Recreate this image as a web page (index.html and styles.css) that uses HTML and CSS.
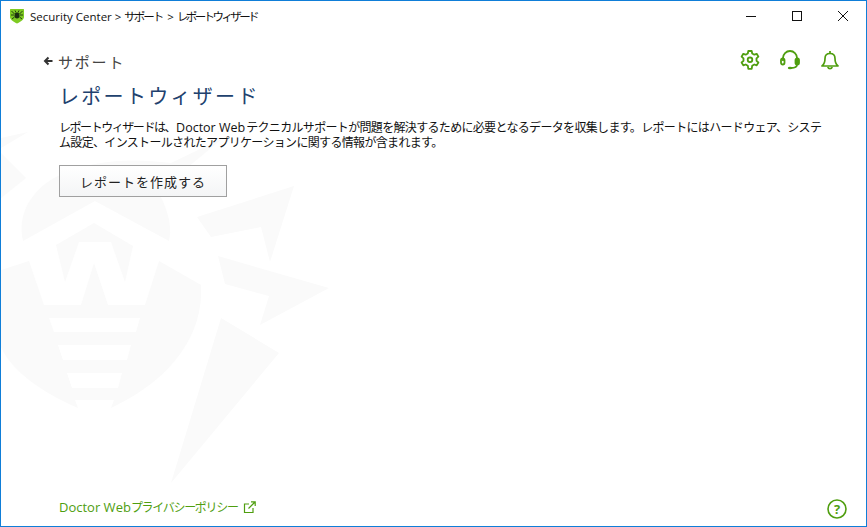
FILE: index.html
```html
<!DOCTYPE html>
<html lang="ja">
<head>
    <meta charset="UTF-8">
    <meta name="viewport" content="width=device-width, initial-scale=1.0">
    <title>Security Center</title>
    <link rel="stylesheet" href="styles.css">
</head>
<body>
    <div class="window">
        <svg class="watermark" viewBox="0 0 330 400" width="330" height="400">
            <path d="M170 353 L220 188 L278 223 Z"/>
            <path d="M217 126 L328 158 L259 195 L268 166 L224 154 Z"/>
            <path d="M196 87 L293 56 L269 132 L260 97 L210 107 Z"/>
            <path d="M0 140 L28 131 L43 175 L80 175 L93 133 L107 175 L144 175 L158 131 L200 155 C203 205 170 250 110 278 L113 270 L74 270 L77 278 C40 262 10 240 0 217 Z"/>
            <path d="M55 115 L93 93 L132 116 L124 152 L110 112 L78 112 L64 152 Z"/>
            <path d="M22 111 L94 71 L168 111 C172 95 165 75 157 62 L222 8 L170 33 C130 28 95 30 63 43 C35 55 15 80 22 111 Z"/>
            <path d="M0 23 L25 48 L0 68 Z"/>
            <path d="M0 8 L27 2 L0 18 Z"/>
            <path class="cut" d="M48 188 L139 188 L135 202 L53 202 Z"/>
            <path class="cut" d="M57 215 L130 215 L126 230 L62 230 Z"/>
            <path class="cut" d="M66 243 L121 243 L117 258 L71 258 Z"/>
        </svg>

        <header class="titlebar">
            <div class="app-title">
                <svg class="logo" viewBox="0 0 16 16" width="16" height="16">
                    <path d="M1 1.500 Q1 1 1.500 1 H14.500 Q15 1 15 1.500 V9 C15 12 11 14 8 15.500 C5 14 1 12 1 9 Z" fill="#7ecb22"/>
                    <path d="M2.500 3 L5.500 6 M13.500 3 L10.500 6 M2 7 H5 M14 7 H11 M3 11 L5.500 9 M13 11 L10.500 9 M6 2.500 L7 4.500 M10 2.500 L9 4.500" stroke="#1c3010" stroke-width=".900" fill="none"/>
                    <ellipse cx="8" cy="7.500" rx="2.500" ry="3" fill="#1c3010"/>
                </svg>
                <span>Security Center &gt; <span class="crumb">サポート</span> &gt; <span class="crumb narrow">レポートウィザード</span></span>
            </div>
            <div class="window-controls">
                <svg viewBox="0 0 46 30" width="46" height="30"><path d="M18 15.500 H28" stroke="#111"/></svg>
                <svg viewBox="0 0 46 30" width="46" height="30"><rect x="18.500" y="10.500" width="9" height="9" fill="none" stroke="#111"/></svg>
                <svg viewBox="0 0 46 30" width="46" height="30"><path d="M18 10 L28 20 M28 10 L18 20" stroke="#111"/></svg>
            </div>
        </header>

        <div class="toolbar">
            <a class="back">
                <svg viewBox="0 0 10 10" width="10" height="10"><path d="M9.500 5 H2.500 M5.500 1.500 L2 5 L5.500 8.500" fill="none" stroke="#333" stroke-width="2"/></svg>
                <span>サポート</span>
            </a>
            <div class="tools">
                <svg viewBox="0 0 20 20" width="20" height="20" fill="none" stroke="#4f9e0f" stroke-width="1.800">
                    <path d="M8.300 1 H11.700 L12.200 3.500 L14.300 4.700 L16.700 3.800 L18.400 6.700 L16.500 8.400 V10.800 L18.400 12.500 L16.700 15.400 L14.300 14.500 L12.200 15.700 L11.700 18.800 H8.300 L7.800 15.700 L5.700 14.500 L3.300 15.400 L1.600 12.500 L3.500 10.800 V8.400 L1.600 6.700 L3.300 3.800 L5.700 4.700 L7.800 3.500 Z" stroke-linejoin="round"/>
                    <circle cx="10" cy="9.800" r="2.300"/>
                </svg>
                <svg viewBox="0 0 20 20" width="20" height="20" fill="none" stroke="#4f9e0f" stroke-width="1.800">
                    <path d="M3 11 V8 A7 7 0 0 1 17 8 V11"/>
                    <rect x="1" y="8.500" width="3.500" height="6" rx="1.700"/>
                    <rect x="15.500" y="8.500" width="3.500" height="6" rx="1.700" fill="#4f9e0f"/>
                    <path d="M17 14.500 C17 17 14 18 11 18"/>
                    <ellipse cx="10" cy="18" rx="2.200" ry="1.300" fill="#4f9e0f" stroke="none"/>
                </svg>
                <svg viewBox="0 0 20 20" width="20" height="20" fill="none" stroke="#4f9e0f" stroke-width="1.700">
                    <path d="M2 16 C4.500 14 5 11 5 8.500 C5 5.500 7 3.500 10 3.500 C13 3.500 15 5.500 15 8.500 C15 11 15.500 14 18 16 Z" stroke-linejoin="round"/>
                    <path d="M10 1 V3.500 M7.800 17 A2.300 2.300 0 0 0 12.200 17"/>
                </svg>
            </div>
        </div>

        <main class="content">
            <h1>レポートウィザード</h1>
            <p class="intro"><span class="tight">レポートウィザードは、</span><span class="latin">Doctor Web</span>テクニカルサポートが問題を解決するために必要となるデータを収集します。レポートにはハードウェア、システム設定、インストールされたアプリケーションに関する情報が含まれます。</p>
            <button class="action">レポートを作成する</button>
        </main>

        <footer class="footer">
            <a class="policy">
                <span><span class="latin">Doctor Web</span>プライバシーポリシー</span>
                <svg viewBox="0 0 13 13" width="13" height="13" fill="none" stroke="#4f9e0f" stroke-width="1.200">
                    <path d="M10 7 V11.500 H1.500 V3 H6"/>
                    <path d="M5.500 7.500 L12 1 M8 .800 H12.200 V5"/>
                </svg>
            </a>
            <svg class="help" viewBox="0 0 20 20" width="20" height="20">
                <circle cx="10" cy="10" r="9" fill="none" stroke="#4f9e0f" stroke-width="1.600"/>
                <text x="10" y="14.500" text-anchor="middle">?</text>
            </svg>
        </footer>
    </div>
</body>
</html>
```

FILE: styles.css
```css
html, body {
    margin: 0;
    height: 100%;
}
body {
    font-family: "Open Sans", "Noto Sans CJK JP", sans-serif;
    color: #111;
    background: #fff;
}
.window {
    position: relative;
    box-sizing: border-box;
    height: 527px;
    display: flex;
    flex-direction: column;
    border: 1px solid #0f7ed8;
    overflow: hidden;
}
.watermark {
    position: absolute;
    left: 0;
    top: 129px;
    fill: #fafafa;
}
.watermark .cut {
    fill: #fff;
}
.titlebar {
    position: relative;
    display: flex;
    justify-content: space-between;
    height: 30px;
    flex-shrink: 0;
}
.app-title {
    display: flex;
    align-items: center;
    gap: 5px;
    padding-left: 8px;
    font-size: 11.500px;
    color: #111;
}
.crumb {
    letter-spacing: -2px;
    margin-right: 2px;
}
.crumb.narrow {
    letter-spacing: -2.600px;
}
.window-controls {
    display: flex;
}
.toolbar {
    position: relative;
    display: flex;
    justify-content: space-between;
    align-items: center;
    height: 30px;
    margin-top: 15px;
    padding: 0 26px 0 42px;
    flex-shrink: 0;
}
.back {
    display: flex;
    align-items: center;
    gap: 5px;
    font-size: 15px;
    letter-spacing: 1.800px;
    color: #444;
}
.tools {
    display: flex;
    gap: 20px;
    margin-top: -3px;
}
.content {
    position: relative;
    flex: 1;
    padding: 0 40px 0 58px;
}
h1 {
    margin: 6px 0 0;
    font-size: 20px;
    line-height: 30px;
    font-weight: 400;
    letter-spacing: 2.300px;
    color: #21416e;
}
.intro {
    margin: 8px 0 0;
    font-size: 12px;
    line-height: 15px;
    letter-spacing: -.670px;
    color: #111;
}
.tight {
    letter-spacing: -1.450px;
}
.latin {
    margin: 0 1px;
    font-size: 12.500px;
    letter-spacing: 0;
}
.action {
    display: block;
    box-sizing: border-box;
    width: 168px;
    height: 32px;
    margin-top: 15px;
    padding: 0;
    border: 1px solid #a0a0a0;
    background: linear-gradient(#ffffff, #f4f5f6);
    font-family: inherit;
    font-size: 13px;
    letter-spacing: 1px;
    color: #222;
}
.footer {
    position: relative;
    display: flex;
    justify-content: space-between;
    align-items: center;
    padding: 0 19px 7px 58px;
    flex-shrink: 0;
}
.policy {
    display: flex;
    align-items: center;
    gap: 5px;
    margin-top: -4px;
    font-size: 12px;
    letter-spacing: -1.300px;
    color: #4f9e0f;
}
.policy .latin {
    margin: 0;
    font-size: 13px;
    letter-spacing: 0;
}
.help text {
    font-family: "Open Sans", sans-serif;
    font-size: 13px;
    font-weight: 700;
    fill: #4f9e0f;
}
```
